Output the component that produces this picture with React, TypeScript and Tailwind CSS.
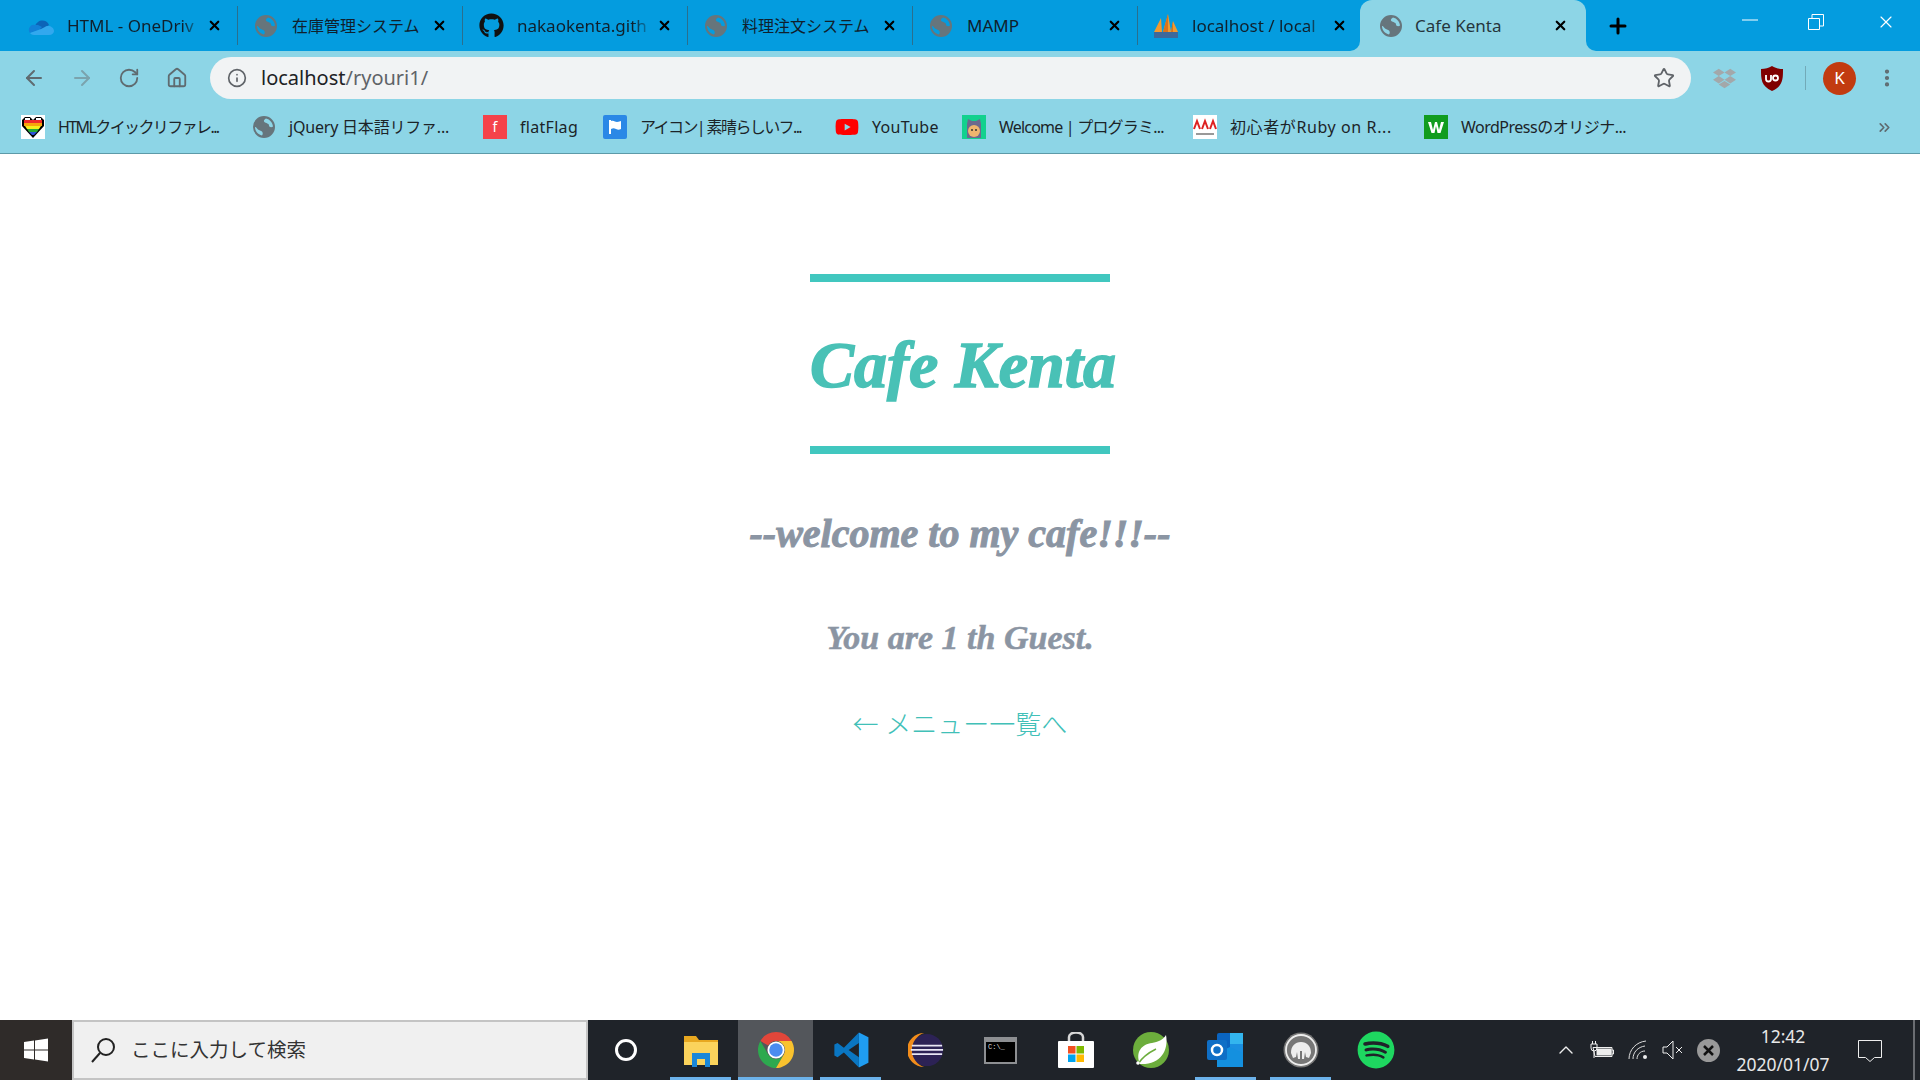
import { ArrowLeft, ArrowRight, ChevronUp, ChevronsRight, Home, Info, MoreVertical, Plus, RotateCw, Star, X } from "lucide-react";
import { FaDropbox, FaGithub, FaSpotify, FaYoutube } from "react-icons/fa";
import type { ReactNode } from "react";

const uiFont = "font-['Noto_Sans','Noto_Sans_CJK_JP',sans-serif]";
const scriptFont = "font-['Liberation_Serif',serif] italic font-bold";

function Globe({ size = 24 }: { size?: number }) {
  return (
    <svg width={size} height={size} viewBox="0 0 24 24">
      <path
        fillRule="evenodd"
        fill="#66757c"
        d="M12 1a11 11 0 1 0 0 22 11 11 0 0 0 0-22zM14 3.500c-2 1-3 3-1 4s4 1 4 3 3 2 4 1c-.5-4-3-7-7-8zM3 12c0 4 3 7.500 7 8.500 1-1 1-3 0-4s-3-1-4-2-2-3-3-2.500z"
      />
    </svg>
  );
}

function OneDrive() {
  return (
    <svg width="26" height="18" viewBox="0 0 26 18">
      <path d="M10 5a7 7 0 0 1 11 3l-8 5-6-3a6 6 0 0 1 3-5z" fill="#0c64b8" />
      <path d="M7 8a5 5 0 0 0-5 8l9-3 3-3-4-2z" fill="#1181d8" />
      <path d="M2 16c1 1 2 2 4 2h15c3 0 5-2 5-4 0-3-3-5-6-5-3 0-4 2-7 3l-11 4z" fill="#32a8ee" />
    </svg>
  );
}

function Pma() {
  return (
    <svg width="26" height="26" viewBox="0 0 26 26">
      <path d="M1 19 8 5l1 14zM10 19l5-18 3 18zM18 19l2-11 5 11z" fill="#f29a2e" />
      <path d="M10 19l5-18v18zM18 19l2-11v11z" fill="#d9731a" />
      <rect x="1" y="19" width="24" height="6" fill="#48608f" opacity=".85" />
    </svg>
  );
}

function HeartIcon() {
  return (
    <svg width="24" height="24" viewBox="0 0 24 24">
      <rect width="24" height="24" fill="#fff" />
      <path d="M12 23 1 11V5l3-3h5l3 3 3-3h5l3 3v6z" fill="#000" />
      <path d="M3 5h18v3H3z" fill="#ee2b2b" />
      <path d="M3 8h18v3H3z" fill="#f7a50b" />
      <path d="M4 11h16l-2 3H6z" fill="#f5ee1b" />
      <path d="M6 14h12l-2 3H8z" fill="#27a936" />
      <path d="M8 17h8l-3 3h-2z" fill="#2c54d8" />
      <path d="M4 3h5v2H4zM15 3h5v2h-5z" fill="#fff" />
    </svg>
  );
}

function FlagIcon() {
  return (
    <svg width="24" height="24" viewBox="0 0 24 24">
      <rect width="24" height="24" rx="2" fill="#2a88e6" />
      <path d="M6 5h2v14H6zM8 6c3-1 4 1 6 1s3-1 4-1v8c-2 1-3 1-5 0s-3-1-5 0z" fill="#fff" />
    </svg>
  );
}

function CatIcon() {
  return (
    <svg width="24" height="24" viewBox="0 0 24 24">
      <rect width="24" height="24" fill="#12d18e" />
      <path d="M5 9 6 4l4 2h4l4-2 1 5v14H5z" fill="#6b6a8e" />
      <circle cx="12" cy="16" r="6" fill="#eeb56e" />
      <circle cx="10" cy="15" r="1" fill="#333" />
      <circle cx="14" cy="15" r="1" fill="#333" />
    </svg>
  );
}

function AaaIcon() {
  return (
    <svg width="24" height="24" viewBox="0 0 24 24">
      <rect width="24" height="24" fill="#fff" />
      <path d="M1 14 4 6l3 8M9 14l3-8 3 8M17 14l3-8 3 8" fill="none" stroke="#d22" strokeWidth="2" />
      <rect x="3" y="18" width="18" height="2" fill="#999" />
    </svg>
  );
}

function WIcon() {
  return (
    <svg width="24" height="24" viewBox="0 0 24 24">
      <rect width="24" height="24" fill="#119c1f" />
      <path d="M4 7h3l2 8 2-8h2l2 8 2-8h3l-3.500 11h-3L12 11l-1.500 7h-3z" fill="#fff" />
    </svg>
  );
}

function UBlock() {
  return (
    <svg width="22" height="25" viewBox="0 0 22 25">
      <path d="M11 0c3 2 7 3 11 3 0 10 0 17-11 22C0 20 0 13 0 3c4 0 8-1 11-3z" fill="#800000" />
      <path d="M5 9v4a2.500 2.500 0 0 0 5 0V9M12 12a2.500 2.500 0 1 1 5 0 2.500 2.500 0 0 1-5 0z" fill="none" stroke="#fff" strokeWidth="1.800" />
    </svg>
  );
}

function WindowsLogo() {
  return (
    <svg width="24" height="24" viewBox="0 0 24 24" fill="#fff">
      <path d="M0 4l10-1.400V11.500H0zM11 2.400 24 .5v11H11zM0 12.500h10v9L0 20zM11 12.500h13v11l-13-1.900z" />
    </svg>
  );
}

function ChromeLogo() {
  return (
    <svg width="36" height="36" viewBox="4 4 40 40">
      <path d="M24 4A20 20 0 0 1 41.320 14H24A10 10 0 0 0 15.340 19L6.680 14A20 20 0 0 1 24 4Z" fill="#e2463a" />
      <path d="M6.680 14 15.340 29A10 10 0 0 0 32.660 29L24 44A20 20 0 0 1 6.680 14Z" fill="#2da94f" />
      <path d="M41.320 14H24A10 10 0 0 1 32.660 29L24 44A20 20 0 0 0 41.320 14Z" fill="#f9c22e" />
      <circle cx="24" cy="24" r="9.500" fill="#fff" />
      <circle cx="24" cy="24" r="7.500" fill="#4a8cf0" />
    </svg>
  );
}

function VsCode() {
  return (
    <svg width="38" height="38" viewBox="0 0 48 48">
      <path d="M34 2 46 8v32l-12 6z" fill="#1f9cf0" />
      <path d="M34 2 15 21 7 15l-4 2v14l4 2 8-6 19 19V33L21 24l13-9z" fill="#0a76c2" />
    </svg>
  );
}

function Eclipse() {
  return (
    <svg width="36" height="36" viewBox="0 0 38 38">
      <circle cx="20" cy="19" r="17" fill="#2c2255" />
      <path d="M17 1A18 18 0 0 0 17 37 19 19 0 0 1 17 1z" fill="#f28d1b" />
      <path d="M4 13.500h32v1.800H4zM3 18h34v1.800H3zM4 22.500h32v1.800H4z" fill="#e8e6f4" />
    </svg>
  );
}

function Cmd() {
  return (
    <div className="w-[33px] h-[27px] border-2 border-[#8d8f92] bg-black flex flex-col">
      <div className="h-[3px] bg-[#8d8f92]" />
      <span className="text-[7px] leading-[10px] pl-0.5 text-[#ddd] font-['Liberation_Mono',monospace]">C:\_</span>
    </div>
  );
}

function Store() {
  return (
    <svg width="36" height="36" viewBox="0 0 36 36">
      <path d="M11 9V5a7 4.500 0 0 1 14 0v4" fill="none" stroke="#d8d8d8" strokeWidth="2.500" />
      <rect y="9" width="36" height="27" rx="1" fill="#fff" />
      <rect x="10" y="14" width="7.500" height="7.500" fill="#f25022" />
      <rect x="18.500" y="14" width="7.500" height="7.500" fill="#7fba00" />
      <rect x="10" y="22.500" width="7.500" height="7.500" fill="#00a4ef" />
      <rect x="18.500" y="22.500" width="7.500" height="7.500" fill="#ffb900" />
    </svg>
  );
}

function Spring() {
  return (
    <svg width="38" height="38" viewBox="0 0 38 38">
      <circle cx="19" cy="19" r="18" fill="#6cad3c" />
      <path d="M34 4c3 16-6 30-26 29C3 21 10 13 20 12c6-1 11-3 14-8z" fill="#fff" />
      <path d="M6 33c5-8 12-12 18-15" stroke="#6cad3c" strokeWidth="1.500" fill="none" />
      <circle cx="6" cy="32" r="1.800" fill="#fff" />
    </svg>
  );
}

function Outlook() {
  return (
    <svg width="38" height="38" viewBox="0 0 38 38">
      <rect x="10" y="2" width="26" height="34" rx="2" fill="#0a64c0" />
      <rect x="23" y="2" width="13" height="11" fill="#33b5ee" />
      <rect x="23" y="13" width="13" height="9" fill="#1a8fe0" />
      <path d="M10 22l13-6 13 6v14H10z" fill="#1490df" />
      <rect y="9" width="20" height="20" rx="2" fill="#0f6fc6" />
      <circle cx="10" cy="19" r="5" fill="none" stroke="#fff" strokeWidth="2.500" />
    </svg>
  );
}

function Mamp() {
  return (
    <svg width="36" height="36" viewBox="0 0 36 36">
      <circle cx="18" cy="18" r="17.500" fill="#777" />
      <circle cx="18" cy="18" r="15" fill="none" stroke="#eee" strokeWidth="1.800" />
      <path d="M8 21c0-7 4-11 10-11s10 4 10 11l-2 5-3-1-1-5-1 7h-2v-8h-2v8h-2l-1-7-1 5-3 1z" fill="#eee" />
    </svg>
  );
}

const tabs: { title: string; icon: ReactNode; clip?: boolean; latin?: boolean }[] = [
  { title: "HTML - OneDriv", icon: <OneDrive />, clip: true, latin: true },
  { title: "在庫管理システム", icon: <Globe /> },
  { title: "nakaokenta.gith", icon: <FaGithub size={25} color="#111" />, clip: true, latin: true },
  { title: "料理注文システム", icon: <Globe /> },
  { title: "MAMP", icon: <Globe />, latin: true },
  { title: "localhost / local", icon: <Pma />, clip: true, latin: true },
];

const bookmarks: { title: string; icon: ReactNode; width: string; track: string }[] = [
  { title: "HTMLクイックリファレ...", icon: <HeartIcon />, width: "w-[231px]", track: "tracking-[-1.6px]" },
  { title: "jQuery 日本語リファ...", icon: <Globe />, width: "w-[231px]", track: "tracking-[-0.2px]" },
  {
    title: "flatFlag",
    icon: <div className="w-6 h-6 bg-[#f4424a] text-white text-sm text-center leading-6">f</div>,
    width: "w-[120px]",
    track: "tracking-[0.3px]",
  },
  { title: "アイコン| 素晴らしいフ...", icon: <FlagIcon />, width: "w-[232px]", track: "tracking-[-1.6px]" },
  { title: "YouTube", icon: <FaYoutube size={24} color="#f00" />, width: "w-[127px]", track: "tracking-[0.3px]" },
  { title: "Welcome | プログラミ...", icon: <CatIcon />, width: "w-[231px]", track: "tracking-[-0.8px]" },
  { title: "初心者がRuby on R...", icon: <AaaIcon />, width: "w-[231px]", track: "tracking-[0.6px]" },
  { title: "WordPressのオリジナ...", icon: <WIcon />, width: "w-[300px]", track: "tracking-[-0.5px]" },
];

const taskbarApps: { icon: ReactNode; running?: boolean; active?: boolean }[] = [
  { icon: <div className="w-[22px] h-[22px] rounded-full border-[3px] border-white" /> },
  {
    icon: (
      <svg width="36" height="34" viewBox="0 0 36 34">
        <path d="M1 3h12l3 4h19v25H1z" fill="#e8a820" />
        <path d="M1 9h34v23H1z" fill="#fbd35c" />
        <path d="M9 20h18v14h-5v-8h-8v8H9z" fill="#1b87d8" />
      </svg>
    ),
    running: true,
  },
  { icon: <ChromeLogo />, running: true, active: true },
  { icon: <VsCode />, running: true },
  { icon: <Eclipse /> },
  { icon: <Cmd /> },
  { icon: <Store /> },
  { icon: <Spring /> },
  { icon: <Outlook />, running: true },
  { icon: <Mamp />, running: true },
  { icon: <FaSpotify size={38} color="#1ed760" /> },
];

function Tab({ title, icon, clip, latin }: { title: string; icon: ReactNode; clip?: boolean; latin?: boolean }) {
  return (
    <div className="w-[225px] h-full flex items-center border-r border-[#2a6f8e]">
      <div className="w-[54px] flex justify-center pl-0.5">{icon}</div>
      <div
        className={`w-[136px] whitespace-nowrap overflow-hidden text-[#10202c] ${latin ? "text-[17px]" : "text-[16px]"} ${
          clip ? "[mask-image:linear-gradient(to_right,#000_85%,transparent)]" : ""
        }`}
      >
        {title}
      </div>
      <X size={15} strokeWidth={3.5} color="#000" className="ml-1" />
    </div>
  );
}

function ChromeFrame() {
  return (
    <header className={`shrink-0 ${uiFont}`}>
      {/* tab strip */}
      <div className="h-[51px] bg-[#049cdf] flex items-end pl-[13px]">
        <div className="h-[39px] flex items-center self-start mt-[6px]">
          {tabs.map((t) => (
            <Tab key={t.title} {...t} />
          ))}
        </div>
        <div className="w-[226px] h-[51px] bg-[#8dd5e6] rounded-t-xl flex items-center -ml-[3px] relative">
          <span className="absolute -left-[10px] bottom-0 w-[10px] h-[10px] bg-[#8dd5e6]">
            <span className="block w-full h-full bg-[#049cdf] rounded-br-[10px]" />
          </span>
          <div className="w-[30px] flex justify-center ml-[16px]">
            <Globe />
          </div>
          <div className="ml-[9px] w-[138px] text-[17px] text-[#26353d]">Cafe Kenta</div>
          <X size={15} strokeWidth={3.5} color="#000" />
          <span className="absolute -right-[10px] bottom-0 w-[10px] h-[10px] bg-[#8dd5e6]">
            <span className="block w-full h-full bg-[#049cdf] rounded-bl-[10px]" />
          </span>
        </div>
        <div className="h-full w-[64px] flex items-center justify-center">
          <Plus size={24} strokeWidth={3} color="#000" />
        </div>
        <div className="h-full flex-1 flex items-start justify-end pt-[14px] text-white">
          <svg width="16" height="16" viewBox="0 0 16 16" className="mr-[50px]">
            <path d="M0 6h16" stroke="#fff" />
          </svg>
          <svg width="16" height="16" viewBox="0 0 16 16" className="mr-[52px]">
            <path d="M.5 4.500h11v11H.5zM4 4V.5h11.500V12H12" fill="none" stroke="#fff" />
          </svg>
          <X size={20} strokeWidth={1.4} color="#fff" className="mr-[24px] -mt-0.5" />
        </div>
      </div>
      {/* toolbar */}
      <div className="h-[56px] bg-[#8dd5e6] flex items-center pl-[22px] pr-[18px] pb-[2px]">
        <ArrowLeft size={24} color="#5f6b70" strokeWidth={2} className="mr-[24px]" />
        <ArrowRight size={24} color="#7ba3ad" strokeWidth={2} className="mr-[24px]" />
        <RotateCw size={22} color="#5f6b70" strokeWidth={2} className="mr-[26px]" />
        <Home size={22} color="#5f6b70" strokeWidth={2} className="mr-[22px]" />
        <div className="w-[1481px] h-[42px] rounded-full bg-[#f1f3f4] flex items-center pl-[17px] pr-[16px]">
          <Info size={20} color="#5f6368" strokeWidth={2} />
          <span className="ml-[14px] text-[20px]">
            <span className="text-[#202124]">localhost</span>
            <span className="text-[#5f6368]">/ryouri1/</span>
          </span>
          <Star size={22} color="#5f6368" strokeWidth={2} className="ml-auto" />
        </div>
        <FaDropbox size={23} color="#a3a8aa" className="ml-[22px]" />
        <div className="ml-[25px]">
          <UBlock />
        </div>
        <div className="w-px h-6 bg-[#72aab8] ml-[22px]" />
        <div className="w-[33px] h-[33px] ml-[17px] rounded-full bg-[#c23b10] text-white text-[17px] flex items-center justify-center">
          K
        </div>
        <MoreVertical size={22} color="#5f6b70" strokeWidth={2.6} className="ml-[20px]" />
      </div>
      {/* bookmarks */}
      <div className="h-[47px] bg-[#8dd5e6] border-b border-[#5d9aa8] flex items-center pl-[21px] pr-[24px] pb-[6px]">
        {bookmarks.map((b) => (
          <div key={b.title} className={`${b.width} flex items-center gap-[13px] shrink-0 text-[16px] text-[#1c2428]`}>
            <span className="w-6 h-6 flex items-center justify-center shrink-0">{b.icon}</span>
            <span className={`whitespace-nowrap ${b.track}`}>{b.title}</span>
          </div>
        ))}
        <ChevronsRight size={17} color="#5f6b70" strokeWidth={2.4} className="ml-auto mr-[3px]" />
      </div>
    </header>
  );
}

function Page() {
  return (
    <main className="flex-1 bg-white flex flex-col items-center pt-[120px]">
      <div className="w-[300px] h-[164px] border-y-[8px] box-content border-[#41c7bf] flex items-center justify-center">
        <h1 className={`${scriptFont} ml-[6px] mt-[2px] text-[66px] leading-none text-[#49c1b6] [-webkit-text-stroke:1.5px_#49c1b6] whitespace-nowrap`}>
          Cafe Kenta
        </h1>
      </div>
      <h2 className={`${scriptFont} mt-[52px] text-[40px] leading-[56px] text-[#8b95a3] [-webkit-text-stroke:1px_#8b95a3] whitespace-nowrap`}>
        --welcome to my cafe!!!--
      </h2>
      <p className={`${scriptFont} mt-[54px] text-[34px] leading-[44px] text-[#8b95a3] [-webkit-text-stroke:0.5px_#8b95a3] whitespace-nowrap`}>
        You are 1 th Guest.
      </p>
      <a className={`${uiFont} mt-[48px] text-[26px] leading-[32px] font-light text-[#41c0b8] whitespace-nowrap`}>← メニュー一覧へ</a>
    </main>
  );
}

function Taskbar() {
  return (
    <footer className={`h-[60px] shrink-0 bg-[#1f2329] flex items-stretch ${uiFont}`}>
      <div className="w-[72px] bg-[#2f2b29] flex items-center justify-center">
        <WindowsLogo />
      </div>
      <div className="w-[516px] bg-[#f0f0f0] border-2 border-[#c4c4c4] flex items-center pl-[16px] text-[#333] text-[19.5px]">
        <svg width="26" height="26" viewBox="0 0 26 26" fill="none" stroke="#222" strokeWidth="2">
          <circle cx="16" cy="10" r="8" />
          <path d="M10 16 2 25" />
        </svg>
        <span className="ml-[15px]">ここに入力して検索</span>
      </div>
      <div className="flex items-stretch">
        {taskbarApps.map((app, i) => (
          <div key={i} className={`w-[75px] flex items-center justify-center relative ${app.active ? "bg-[#53565b]" : ""}`}>
            {app.icon}
            {app.running && <span className={`absolute bottom-0 h-[3px] bg-[#6cb2ea] ${app.active ? "left-0 right-0" : "left-[7px] right-[7px]"}`} />}
          </div>
        ))}
      </div>
      <div className="flex-1 flex items-center justify-end text-[#e8e8e8]">
        <ChevronUp size={24} strokeWidth={1.4} color="#eee" className="mr-[12px]" />
        <svg width="24" height="18" viewBox="0 0 24 18" fill="none" stroke="#eee" className="mr-[14px]">
          <path d="M3 6.500h19v9H5z M22 9h1.500v4H22" />
          <rect x="7" y="8" width="14" height="6" fill="#eee" />
          <path d="M1 3h6v4a3 3 0 0 1-6 0zM2.500 0v3M5.500 0v3M4 10v7" />
        </svg>
        <svg width="20" height="20" viewBox="0 0 20 20" fill="none" stroke="#ddd" className="mr-[14px]">
          <path d="M1 19C1 10 8 2 18 1M5 19c0-7 5-12 12-13M9 19c0-4 3-8 8-8" />
          <circle cx="17" cy="17" r="2" fill="#eee" stroke="none" />
        </svg>
        <svg width="22" height="20" viewBox="0 0 22 20" fill="none" stroke="#eee" className="mr-[13px]">
          <path d="M1 7h4l6-6v18l-6-6H1zM14 7l6 6M20 7l-6 6" />
        </svg>
        <svg width="23" height="23" viewBox="0 0 23 23" className="mr-[15px]">
          <circle cx="11.500" cy="11.500" r="11.500" fill="#999" />
          <path d="M7 7l9 9M16 7l-9 9" stroke="#111" strokeWidth="2.500" />
        </svg>
        <div className="w-[96px] flex flex-col items-center text-[17.5px] leading-[28px] whitespace-nowrap">
          <span>12:42</span>
          <span>2020/01/07</span>
        </div>
        <svg width="24" height="24" viewBox="0 0 24 24" fill="none" stroke="#eee" className="ml-[27px] mr-[31px]">
          <path d="M.5 2.500h23v17h-7l-4.500 4-4.500-4h-7z" />
        </svg>
        <div className="w-[7px] h-full border-l-2 border-[#6a6d72]" />
      </div>
    </footer>
  );
}

export default function App() {
  return (
    <div className="w-[1920px] h-[1080px] flex flex-col overflow-hidden">
      <ChromeFrame />
      <Page />
      <Taskbar />
    </div>
  );
}
